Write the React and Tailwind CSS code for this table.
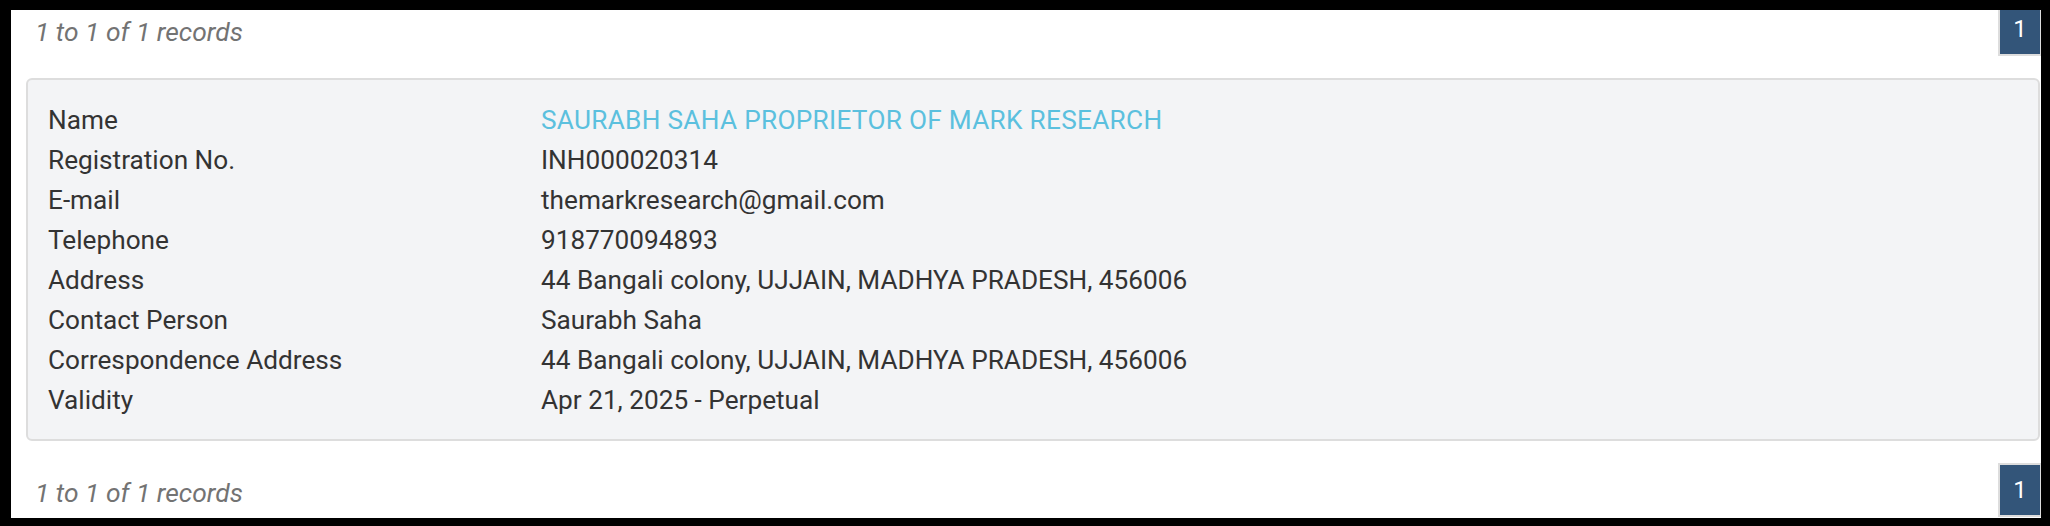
const rows = [
  ['Name', 'SAURABH SAHA PROPRIETOR OF MARK RESEARCH', true],
  ['Registration No.', 'INH000020314'],
  ['E-mail', 'themarkresearch@gmail.com'],
  ['Telephone', '918770094893'],
  ['Address', '44 Bangali colony, UJJAIN, MADHYA PRADESH, 456006'],
  ['Contact Person', 'Saurabh Saha'],
  ['Correspondence Address', '44 Bangali colony, UJJAIN, MADHYA PRADESH, 456006'],
  ['Validity', 'Apr 21, 2025 - Perpetual'],
];

function Pager() {
  return (
    <div className="flex items-center justify-between h-[54px]">
      <span className="pl-[9px] pt-[7px] text-[26.4px] italic text-[#737373]">1 to 1 of 1 records</span>
      <button className="-mr-[2px] w-[44px] h-[54px] flex items-center justify-center border-2 border-[#dddddd] bg-[#335579] text-white text-[24px]">
        1
      </button>
    </div>
  );
}

export default function App() {
  return (
    <div className="w-[2050px] h-[526px] bg-black pt-[10px] pl-[11px] pr-[9px] pb-[8px]">
      <div className="h-full bg-white overflow-hidden font-['Roboto',sans-serif]">
        <div className="-mt-[8px] pl-[15px] pr-px">
          <Pager />
          <div className="mt-[22px] rounded-md border-2 border-[#dddddd] bg-[#f3f4f6] pl-[20px] pt-[20px] pb-[19px]">
            {rows.map(([label, value, info]) => (
              <div key={label} className="grid grid-cols-[493px_1fr] text-[26.2px] leading-[40px] text-[#333333]">
                <span>{label}</span>
                <span className={info ? 'text-[#5bc0de] tracking-[0.3px]' : ''}>{value}</span>
              </div>
            ))}
          </div>
          <div className="mt-[22px]">
            <Pager />
          </div>
        </div>
      </div>
    </div>
  );
}
